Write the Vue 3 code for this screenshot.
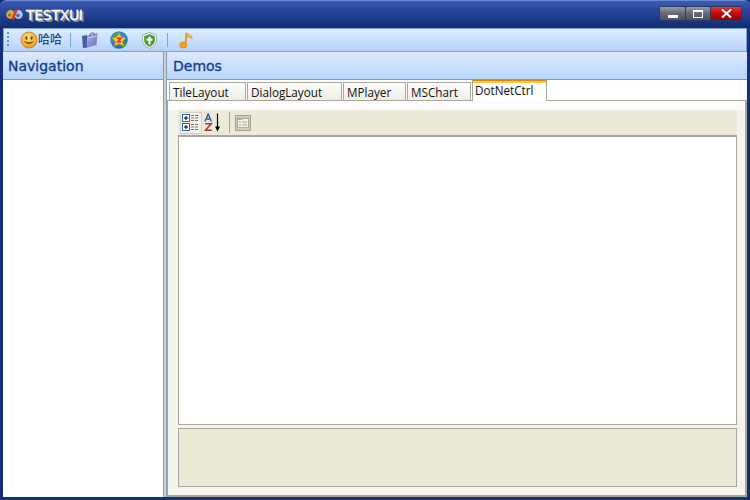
<script setup>
const tabs = [
  { name: 'TileLayout', width: 77 },
  { name: 'DialogLayout', width: 95 },
  { name: 'MPlayer', width: 63 },
  { name: 'MSChart', width: 64 },
]
</script>

<template>
  <div class="window">
    <header class="titlebar">
      <svg class="logo" width="17" height="13" viewBox="0 0 17 13">
        <circle cx="4.6" cy="6.5" r="4.4" fill="#e8a23a" />
        <circle cx="12.4" cy="6.5" r="4.4" fill="#b4c6e2" />
        <path d="M5 11 L9.5 1 L12 2 L7.5 12 Z" fill="#d8402a" />
        <circle cx="12" cy="7.5" r="1.8" fill="#3f66ab" />
        <circle cx="3.5" cy="7" r="1.4" fill="#4a8a3a" />
      </svg>
      <span class="title">TESTXUI</span>
      <div class="caption">
        <button class="cap gray cap-min"><i></i></button>
        <button class="cap gray cap-max"><i></i></button>
        <button class="cap red">
          <svg width="11" height="9" viewBox="0 0 11 9"><path d="M1 0.5 L10 8.5 M10 0.5 L1 8.5" stroke="#fff" stroke-width="2" /></svg>
        </button>
      </div>
    </header>

    <div class="toolbar">
      <span class="grip"></span>
      <svg class="ic first" width="18" height="18" viewBox="0 0 18 18">
        <defs>
          <radialGradient id="sm" cx="45%" cy="35%" r="70%"><stop offset="0" stop-color="#ffe47c" /><stop offset="1" stop-color="#ea961a" /></radialGradient>
          <linearGradient id="bagf" x1="0" y1="0" x2="1" y2="1"><stop offset="0" stop-color="#a9b0e4" /><stop offset="1" stop-color="#6a73bb" /></linearGradient>
          <radialGradient id="gl" cx="40%" cy="35%" r="70%"><stop offset="0" stop-color="#55b0e8" /><stop offset="1" stop-color="#1c5fa8" /></radialGradient>
        </defs>
        <circle cx="9" cy="9" r="8" fill="url(#sm)" stroke="#c67a14" stroke-width="0.8" />
        <ellipse cx="6.4" cy="7" rx="1.1" ry="1.7" fill="#6b3f0a" />
        <ellipse cx="11.6" cy="7" rx="1.1" ry="1.7" fill="#6b3f0a" />
        <path d="M3.8 10 Q9 16.5 14.2 10 Q9 12.3 3.8 10 Z" fill="#8a4f0c" />
      </svg>
      <span class="ha">哈哈</span>
      <span class="sep sep-a"></span>
      <svg class="ic bag" width="17" height="17" viewBox="0 0 17 17">
        <path d="M1 4 L6 3 L6.5 15.5 L2 16 Z" fill="#4f5aa4" />
        <path d="M6 3.5 L16.5 1 L15.5 13 L6.5 15.5 Z" fill="url(#bagf)" />
        <path d="M8.5 4.5 Q9 1 11.5 0.8 Q13.5 0.8 13.5 3.5" fill="none" stroke="#4d5699" stroke-width="1" />
        <path d="M7 6 L15.5 4" stroke="#c5caf0" stroke-width="1" />
      </svg>
      <svg class="ic globe" width="18" height="18" viewBox="0 0 17 17">
        <circle cx="8.5" cy="8.5" r="8.2" fill="url(#gl)" />
        <path d="M1.5 5 Q4 1 8 1 L5 7 Z M11 15 L15 10 L16.5 11 Q14.5 15.5 11 16 Z" fill="#4f9d3c" />
        <path d="M8.5 2 L10.6 6 L15 6.5 L11.8 9.8 L12.8 14.2 L8.5 12 L4.2 14.2 L5.2 9.8 L2 6.5 L6.4 6 Z" fill="#f9cb30" stroke="#e08a1a" stroke-width="0.6" />
        <path d="M6.8 6.8 H10.2 L7.2 10.2 H10.4" fill="none" stroke="#d62c20" stroke-width="1.3" />
      </svg>
      <svg class="ic shield" width="15" height="17" viewBox="0 0 15 17">
        <path d="M7.5 0.5 L14.5 3 V8 Q14.5 13.5 7.5 16.5 Q0.5 13.5 0.5 8 V3 Z" fill="#eef3ee" stroke="#8fa8a0" stroke-width="0.8" />
        <path d="M7.5 2.3 L12.8 4.2 V8 Q12.8 12.3 7.5 14.7 Q2.2 12.3 2.2 8 V4.2 Z" fill="#3f9a2c" />
        <path d="M7.5 4.5 V12.5 M4.5 7.7 H10.5" stroke="#fff" stroke-width="2.2" />
      </svg>
      <span class="sep sep-b"></span>
      <svg class="ic note" width="14" height="17" viewBox="0 0 14 17">
        <ellipse cx="4.3" cy="13" rx="3.6" ry="3" fill="#f0a21e" stroke="#d9780f" stroke-width="0.7" />
        <path d="M6.9 13 L7.2 1.5" stroke="#ee9a18" stroke-width="2" />
        <path d="M7 1 Q12 2 13.5 7 Q11 4.5 7.5 5.2 Z" fill="#f7bd3d" stroke="#d9780f" stroke-width="0.5" />
      </svg>
    </div>

    <div class="body">
      <aside class="nav">
        <div class="pane-head">Navigation</div>
        <div class="nav-fill"></div>
      </aside>
      <div class="splitter"></div>
      <main class="demos">
        <div class="pane-head demos-head">Demos</div>
        <div class="tabbar">
          <div v-for="t in tabs" :key="t.name" class="tab" :style="{ width: t.width + 'px' }">{{ t.name }}</div>
          <div class="tab active">DotNetCtrl</div>
        </div>
        <div class="page">
          <div class="pg-toolbar">
            <span class="pg-btn on">
              <svg width="18" height="19" viewBox="0 0 18 19">
                <rect x="0.5" y="1.5" width="7" height="7" fill="#fff" stroke="#2a66b0" />
                <path d="M2 5 H6 M4 3 V7" stroke="#000" />
                <rect x="0.5" y="10.5" width="7" height="7" fill="#fff" stroke="#2a66b0" />
                <path d="M2 14 H6 M4 12 V16" stroke="#000" />
                <path d="M9 2.5 H17 M9 5 H17 M9 7.5 H17 M9 11.5 H17 M9 14 H17 M9 16.5 H17" stroke="#77776c" stroke-dasharray="3 1" />
              </svg>
            </span>
            <span class="pg-btn az">
              <svg width="19" height="19" viewBox="0 0 19 19">
                <path d="M1 8.5 L4.2 1 L7.4 8.5 M2.2 6 H6.2" fill="none" stroke="#2a5cab" stroke-width="1.4" />
                <path d="M1.2 10.8 H7.2 L1.5 17.3 H7.8" fill="none" stroke="#a0403a" stroke-width="1.6" />
                <path d="M13.5 0.5 V14" stroke="#000" stroke-width="1.2" />
                <path d="M11 13.5 H16 L13.5 18.5 Z" fill="#000" />
              </svg>
            </span>
            <span class="pg-sep"></span>
            <span class="pg-btn pages">
              <svg width="16" height="16" viewBox="0 0 16 16">
                <rect x="0.5" y="0.5" width="15" height="15" fill="#cfccbb" stroke="#a5a294" />
                <rect x="2.5" y="3.5" width="11" height="9" fill="#f2f0e6" stroke="#b0ad9f" />
                <path d="M2.5 4.5 H7 V3.5" stroke="#b0ad9f" fill="none" />
                <path d="M4 7 H6 M7 7 H12 M4 10 H6 M7 10 H12" stroke="#a5a294" />
              </svg>
            </span>
          </div>
          <div class="pg-grid"></div>
          <div class="pg-help"></div>
        </div>
      </main>
    </div>
  </div>
</template>

<style scoped>
.window {
  width: 750px;
  height: 500px;
  box-sizing: border-box;
  padding: 0 3px 3px;
  background: #14307c;
  display: flex;
  flex-direction: column;
  overflow: hidden;
  font-family: "Open Sans", "Noto Sans", "Noto Sans CJK SC", sans-serif;
}
.titlebar {
  height: 28px;
  margin: 0 -3px;
  padding: 0 8px 0 6px;
  display: flex;
  align-items: center;
  flex: none;
  box-sizing: border-box;
  border-radius: 6px 6px 0 0;
  border-top: 1px solid #6a86cf;
  background: linear-gradient(#3a5cb4 0%, #2a4a9e 30%, #0f2c70 100%);
}
.logo { margin-right: 3px; }
.title {
  font: 14px "DejaVu Sans", sans-serif;
  color: #fff;
  -webkit-text-stroke: 0.3px #fff;
  text-shadow: 1px 1px 0 #9a9a9a, 2px 2px 0 #7e86a0;
  letter-spacing: -0.3px;
}
.caption {
  margin-left: auto;
  margin-top: -2px;
  display: flex;
  padding: 1px;
  border-radius: 3px;
  background: #2b3a63;
}
.cap {
  border: 0;
  padding: 0;
  height: 13px;
  display: flex;
  align-items: center;
  justify-content: center;
  border-radius: 1px;
}
.gray { background: linear-gradient(#9a9ea8, #666b78 45%, #4c5160); }
.red { width: 30px; background: linear-gradient(#e23a2e, #c80c0c 45%, #8a0606); }
.cap-min { width: 25px; margin-right: 1px; }
.cap-max { width: 24px; margin-right: 1px; }
.cap-min i { width: 10px; height: 3px; background: #fff; margin-top: 6px; }
.cap-max i { width: 8px; height: 5px; border: 1px solid #fff; border-top-width: 2px; }
.toolbar {
  height: 24px;
  flex: none;
  display: flex;
  align-items: center;
  box-sizing: border-box;
  background: linear-gradient(#dcebff, #c9dffc 55%, #b8d3f7);
  border: 1px solid #7ba6dc;
}
.grip {
  width: 2px;
  height: 16px;
  margin-left: 3px;
  background: repeating-linear-gradient(#5f8fd0 0 2px, transparent 2px 4px);
}
.ic { flex: none; }
.first { margin-left: 11px; }
.ha { font-size: 12px; color: #0a2a72; line-height: 16px; }
.sep { width: 1px; height: 14px; background: #7ba6dc; flex: none; }
.sep-a { margin-left: 8px; }
.bag { margin-left: 10px; }
.globe { margin-left: 12px; }
.shield { margin-left: 14px; }
.sep-b { margin-left: 10px; }
.note { margin-left: 11px; }
.body { flex: 1; display: flex; min-height: 0; background: #fff; }
.nav { width: 160px; flex: none; display: flex; flex-direction: column; }
.nav-fill { flex: 1; background: #fff; }
.pane-head {
  height: 28px;
  flex: none;
  box-sizing: border-box;
  padding: 0 5px;
  display: flex;
  align-items: center;
  background: linear-gradient(#dbeaff, #b9d5fa);
  border-bottom: 1px solid #6b9bd8;
  color: #143f8c;
  font: 500 14px "DejaVu Sans", sans-serif;
  -webkit-text-stroke: 0.35px #143f8c;
}
.splitter {
  width: 4px;
  flex: none;
  box-sizing: border-box;
  background: #d4d0c8;
  border-left: 1px solid #7f9db9;
  border-right: 1px solid #7f9db9;
}
.demos { flex: 1; min-width: 0; display: flex; flex-direction: column; background: #fff; }
.demos-head { padding-left: 6px; }
.tabbar {
  height: 21px;
  flex: none;
  display: flex;
  align-items: flex-start;
  padding-left: 2px;
  gap: 1px;
  box-sizing: border-box;
  border-bottom: 1px solid #aca899;
  position: relative;
}
.tab {
  height: 18px;
  margin-top: 2px;
  box-sizing: border-box;
  border: 1px solid #aca899;
  border-bottom: 0;
  padding-left: 3px;
  font-size: 11.7px;
  line-height: 18px;
  color: #111;
  background: linear-gradient(#fdfdfb, #eeede5);
  overflow: hidden;
}
.tab.active {
  width: 75px;
  height: 21px;
  margin-top: 0;
  border-top: 1px solid #d98a10;
  box-shadow: inset 0 2px 0 #ffc83c;
  background: #fff;
  position: relative;
  z-index: 1;
  line-height: 18px;
  padding-left: 2px;
}
.page {
  flex: 1;
  min-height: 0;
  box-sizing: border-box;
  padding: 9px 8px 8px 10px;
  background: linear-gradient(#fcfcfe 0 9px, #f4f3ee 9px);
  border-bottom: 2px solid #aca899;
  border-left: 1px solid #aca899;
  border-right: 2px solid #aca899;
  display: flex;
  flex-direction: column;
}
.pg-toolbar {
  height: 26px;
  flex: none;
  background: #ece9d8;
  display: flex;
  align-items: center;
  padding-left: 2px;
  box-sizing: border-box;
  border-bottom: 1px solid #aca899;
}
.pg-btn { display: flex; align-items: center; justify-content: center; }
.pg-btn.on { width: 22px; height: 22px; background: #f5f4ec; border: 1px solid #d4d0c8; box-sizing: border-box; }
.az { margin-left: 2px; }
.pg-sep { width: 1px; height: 21px; background: #aca899; margin: 0 5px 0 6px; }
.pg-grid { flex: 1; background: #fff; border: 1px solid #aca899; min-height: 0; }
.pg-help { height: 59px; flex: none; margin-top: 3px; background: #ece9d8; border: 1px solid #aca899; box-sizing: border-box; }
</style>
